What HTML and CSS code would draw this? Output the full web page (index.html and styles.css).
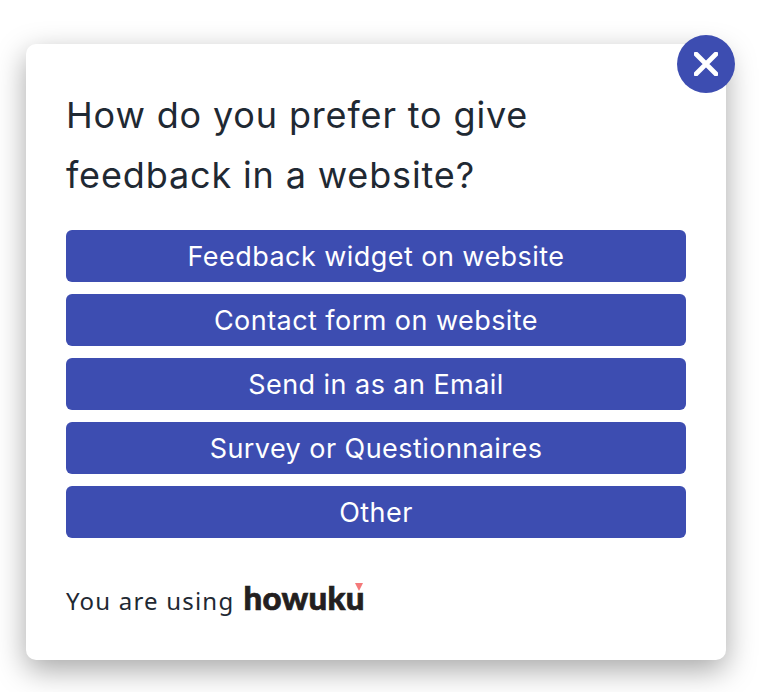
FILE: index.html
```html
<!DOCTYPE html>
<html lang="en">
<head>
    <meta charset="UTF-8">
    <title>Howuku feedback</title>
    <link rel="stylesheet" href="styles.css">
</head>
<body>

    <main class="card">
        <button class="close-button" aria-label="Close">
            <svg viewBox="0 0 24 24" width="24" height="24">
                <path d="M2 2 L22 22 M22 2 L2 22" fill="none" stroke="#fff" stroke-width="4.8" stroke-linecap="round"/>
            </svg>
        </button>

        <h1 class="question">How do you prefer to give feedback in a website?</h1>

        <section class="options">
            <button class="option">Feedback widget on website</button>
            <button class="option">Contact form on website</button>
            <button class="option">Send in as an Email</button>
            <button class="option">Survey or Questionnaires</button>
            <button class="option">Other</button>
        </section>

        <footer class="powered">
            <span class="powered-text">You are using</span>
            <span class="logo">howuku<span class="logo-mark"></span></span>
        </footer>
    </main>

</body>
</html>
```

FILE: styles.css
```css
body {
    margin: 0;
    height: 692px;
    overflow: hidden;
    background-color: #fff;
    font-family: Inter, "Liberation Sans", sans-serif;
}

.card {
    position: relative;
    box-sizing: border-box;
    width: 700px;
    height: 616px;
    margin: 44px 0 0 26px;
    padding: 41px 40px 0;
    background-color: #fff;
    border-radius: 10px;
    box-shadow: 0 10px 30px rgba(0, 0, 0, 0.35);
}

.close-button {
    position: absolute;
    top: -9px;
    right: -9px;
    display: flex;
    align-items: center;
    justify-content: center;
    width: 58px;
    height: 58px;
    padding: 0;
    border: none;
    border-radius: 50%;
    background-color: #3d4db1;
}

.question {
    width: 560px;
    margin: 0 0 25px;
    font-size: 36px;
    font-weight: 400;
    line-height: 60px;
    letter-spacing: 0.85px;
    color: #1f2933;
}

.options {
    display: flex;
    flex-direction: column;
    gap: 12px;
}

.option {
    height: 52px;
    padding: 0;
    border: none;
    border-radius: 6px;
    background-color: #3d4db1;
    color: #fff;
    font-family: Inter, "Liberation Sans", sans-serif;
    font-size: 27px;
    letter-spacing: 0.45px;
}

.powered {
    display: flex;
    align-items: baseline;
    gap: 9px;
    margin-top: 43px;
    color: #1f2933;
}

.powered-text {
    font-family: "Noto Sans", sans-serif;
    font-size: 24px;
    letter-spacing: 1.2px;
}

.logo {
    position: relative;
    font-family: Lato, sans-serif;
    font-size: 33px;
    font-weight: 900;
    line-height: 1;
    letter-spacing: 0.3px;
    color: #231f20;
    -webkit-text-stroke: 0.7px #231f20;
}

.logo-mark {
    position: absolute;
    top: 2px;
    right: 2px;
    border-left: 4.5px solid transparent;
    border-right: 4.5px solid transparent;
    border-top: 8px solid #f4797a;
}
```
